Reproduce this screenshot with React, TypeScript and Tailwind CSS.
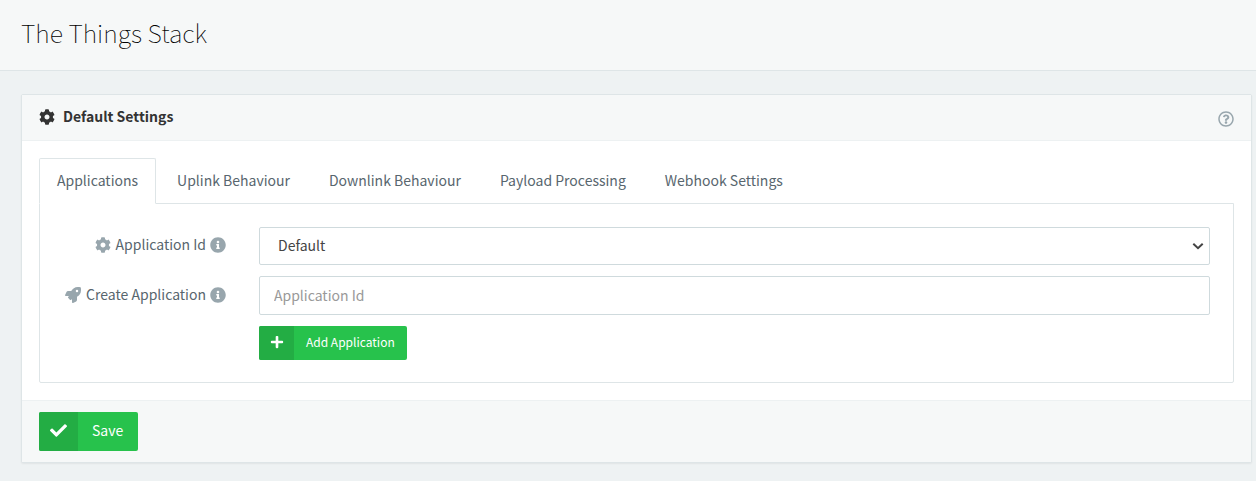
import { useState } from "react";
import {
  FaCheck,
  FaCog,
  FaInfoCircle,
  FaPlus,
  FaRegQuestionCircle,
  FaRocket,
} from "react-icons/fa";

const tabs = [
  "Applications",
  "Uplink Behaviour",
  "Downlink Behaviour",
  "Payload Processing",
  "Webhook Settings",
];

export default function App() {
  const [active, setActive] = useState(tabs[0]);
  const [name, setName] = useState("");

  return (
    <div className="min-h-screen bg-[#eef2f3] pb-4 font-['Noto_Sans_CJK_SC','Noto_Sans',sans-serif] text-sm text-[#58666e]">
      <header className="border-b border-[#dee5e7] bg-[#f6f8f8] px-[21px] pt-[14px] pb-5">
        <h1 className="font-['Noto_Sans_CJK_SC_Thin','Noto_Sans_CJK_SC_Light','Noto_Sans_CJK_SC',sans-serif] text-[25px] leading-9 font-thin text-black">
          The Things Stack
        </h1>
      </header>

      <main className="pt-[23px] pr-1 pl-[21px]">
        <section className="rounded-xs border border-[#dee5e7] bg-white shadow-[0_1px_2px_rgba(0,0,0,0.06)]">
          <div className="flex items-center justify-between border-b border-[#edf1f2] bg-[#f6f8f8] px-[17px] pt-[11px] pb-[13px]">
            <h2 className="flex items-center gap-2 leading-[21px] font-bold text-[#333333]">
              <FaCog className="size-4" />
              Default Settings
            </h2>
            <button type="button" aria-label="Help" className="mt-1 text-[#98a6ad]">
              <FaRegQuestionCircle className="size-4" />
            </button>
          </div>

          <div className="p-[17px]">
            <div role="tablist" className="relative -mb-px flex gap-[3px]">
              {tabs.map((tab) => (
                <button
                  key={tab}
                  type="button"
                  role="tab"
                  aria-selected={tab === active}
                  onClick={() => setActive(tab)}
                  className={
                    tab === active
                      ? "rounded-t-xs border border-[#dee5e7] border-b-white bg-white px-[17px] pt-[11px] pb-3 leading-[21px]"
                      : "border border-transparent px-[17px] pt-[11px] pb-3 leading-[21px]"
                  }
                >
                  {tab}
                </button>
              ))}
            </div>

            <form
              onSubmit={(event) => event.preventDefault()}
              className="grid grid-cols-[186px_1fr] items-center gap-x-[33px] gap-y-[11px] rounded-b-xs border border-[#dee5e7] pt-[23px] pr-[23px] pb-[22px]"
            >
              <label htmlFor="application" className="flex items-center justify-end gap-1 pb-0.5">
                <FaCog className="mr-px size-4 text-[#98a6ad]" />
                <span className="pb-0.5">Application Id</span>
                <FaInfoCircle className="size-4 text-[#98a6ad]" />
              </label>
              <div className="relative">
                <select
                  id="application"
                  className="block h-[38px] w-full appearance-none rounded-xs border border-[#cfdadd] bg-white px-[18px] pb-0.5 text-[#444444]"
                >
                  <option>Default</option>
                </select>
                <svg
                  viewBox="0 0 12 8"
                  className="pointer-events-none absolute top-[15px] right-[6px] h-2 w-3 fill-none stroke-[#444444] stroke-2"
                >
                  <path d="M1.3 1.7 6 6.2l4.7-4.5" />
                </svg>
              </div>

              <label htmlFor="new-application" className="flex items-center justify-end gap-1 pb-0.5">
                <FaRocket className="mr-px size-4 text-[#98a6ad]" />
                <span className="pb-0.5">Create Application</span>
                <FaInfoCircle className="size-4 text-[#98a6ad]" />
              </label>
              <input
                id="new-application"
                type="text"
                placeholder="Application Id"
                value={name}
                onChange={(event) => setName(event.target.value)}
                className="h-[39px] w-full rounded-xs border border-[#cfdadd] bg-white px-[14px] pb-0.5 placeholder:text-[#999999]"
              />

              <button
                type="submit"
                className="col-start-2 flex h-[34px] items-stretch justify-self-start overflow-hidden rounded-xs bg-[#27c24c] text-xs text-white"
              >
                <span className="flex w-[35px] items-center justify-center bg-[#23ad44] pb-0.5">
                  <FaPlus className="size-[14px]" />
                </span>
                <span className="flex items-center px-3 pb-0.5">Add Application</span>
              </button>
            </form>
          </div>

          <div className="border-t border-[#edf1f2] bg-[#f6f8f8] px-[17px] py-[11px]">
            <button
              type="button"
              className="flex h-[39px] items-stretch overflow-hidden rounded-xs bg-[#27c24c] text-white"
            >
              <span className="flex w-[39px] items-center justify-center bg-[#23ad44] pb-0.5">
                <FaCheck className="size-[17px]" />
              </span>
              <span className="flex items-center pr-[15px] pb-1 pl-[14px]">Save</span>
            </button>
          </div>
        </section>
      </main>
    </div>
  );
}
